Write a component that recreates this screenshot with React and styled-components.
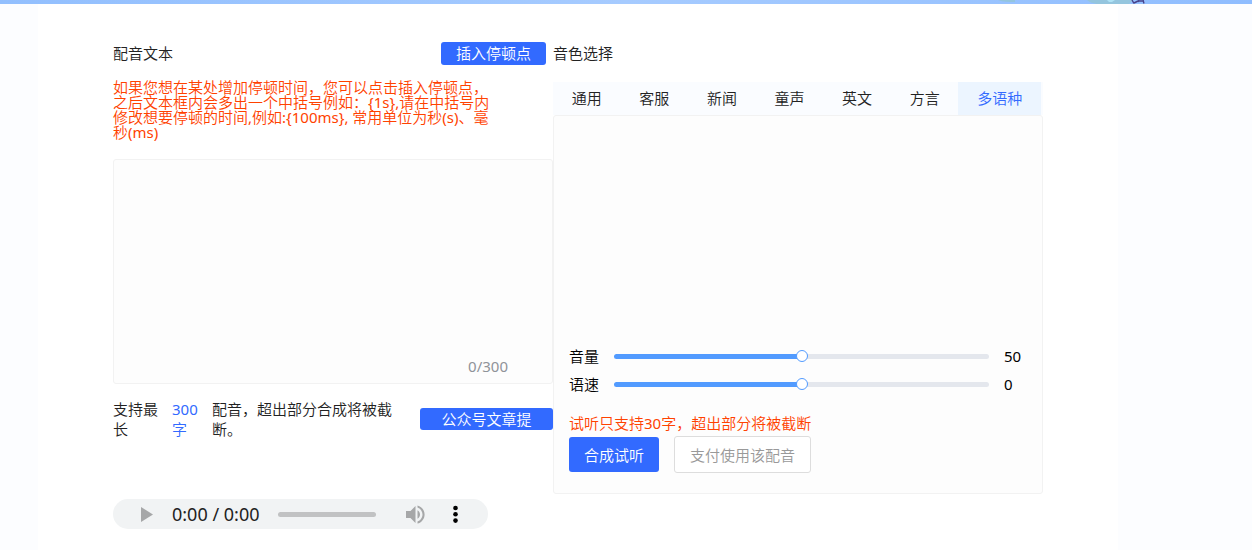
import React, { useState } from "react";
import styled, { createGlobalStyle } from "styled-components";

const TABS = ["通用", "客服", "新闻", "童声", "英文", "方言", "多语种"];
const MAX_LENGTH = 300;

function App() {
    const [text, setText] = useState("");
    const [activeTab, setActiveTab] = useState("多语种");
    const [volume, setVolume] = useState(50);
    const [speed, setSpeed] = useState(0);

    return (
        <>
            <GlobalStyle />
            <Banner>
                <BannerArt />
            </Banner>
            <Page>
                <Card>
                    <TextColumn>
                        <TextHeader>
                            <FieldLabel htmlFor="dub-text">配音文本</FieldLabel>
                            <PauseButton type="button" onClick={() => setText(text + "{1s}")}>
                                插入停顿点
                            </PauseButton>
                        </TextHeader>
                        <Tip>
                            如果您想在某处增加停顿时间，您可以点击插入停顿点，之后文本框内会多出一个中括号例如：{"{1s}"},请在中括号内修改想要停顿的时间,例如:{"{100ms}"}, 常用单位为秒(s)、毫秒(ms)
                        </Tip>
                        <TextBox>
                            <TextArea
                                id="dub-text"
                                maxLength={MAX_LENGTH}
                                value={text}
                                onChange={(e) => setText(e.target.value)}
                            />
                            <Counter>{`${text.length}/${MAX_LENGTH}`}</Counter>
                        </TextBox>
                        <LimitRow>
                            <span>支持最长</span>
                            <LimitNumber>300字</LimitNumber>
                            <span>配音，超出部分合成将被截断。</span>
                            <ExtractButton type="button">公众号文章提</ExtractButton>
                        </LimitRow>
                        <AudioPlayer />
                    </TextColumn>
                    <VoiceColumn>
                        <VoiceTitle>音色选择</VoiceTitle>
                        <TabBar role="tablist">
                            {TABS.map((name) => (
                                <Tab
                                    key={name}
                                    type="button"
                                    role="tab"
                                    aria-selected={name === activeTab}
                                    $active={name === activeTab}
                                    onClick={() => setActiveTab(name)}
                                >
                                    {name}
                                </Tab>
                            ))}
                        </TabBar>
                        <Panel>
                            <VoiceList />
                            <SliderRow id="volume" label="音量" min={0} max={100} value={volume} onChange={setVolume} />
                            <SliderRow id="speed" label="语速" min={-500} max={500} value={speed} onChange={setSpeed} />
                            <Hint>试听只支持30字，超出部分将被截断</Hint>
                            <Actions>
                                <ListenButton type="button">合成试听</ListenButton>
                                <PayButton type="button">支付使用该配音</PayButton>
                            </Actions>
                        </Panel>
                    </VoiceColumn>
                </Card>
            </Page>
        </>
    );
}

function SliderRow({ id, label, min, max, value, onChange }) {
    const percent = ((value - min) / (max - min)) * 100;

    return (
        <SliderLine>
            <label htmlFor={id}>{label}</label>
            <Slider
                id={id}
                type="range"
                min={min}
                max={max}
                value={value}
                style={{ "--percent": `${percent}%` }}
                onChange={(e) => onChange(Number(e.target.value))}
            />
            <SliderValue htmlFor={id}>{value}</SliderValue>
        </SliderLine>
    );
}

function AudioPlayer() {
    return (
        <Player>
            <PlayerButton type="button" aria-label="播放">
                <svg width="20" height="20" viewBox="0 0 20 20">
                    <path d="M5 3v15L17 10.5z" fill="#a6a7a8" />
                </svg>
            </PlayerButton>
            <Time>0:00 / 0:00</Time>
            <Progress type="range" min="0" max="1" defaultValue="0" aria-label="进度" />
            <PlayerButton type="button" aria-label="音量">
                <svg width="24" height="24" viewBox="0 0 24 24">
                    <path
                        d="M3 9v7h4.500l5 5V4L7.500 9H3zM17 12.500c0-1.900-1-3.500-2.500-4.300v8.600c1.500-.8 2.500-2.400 2.500-4.300zM14.500 3.400v2.200c2.900.9 5 3.700 5 6.900s-2.100 6-5 6.900v2.200c4.100-.9 7.100-4.700 7.100-9.100S18.600 4.300 14.500 3.400z"
                        fill="#a6a7a8"
                    />
                </svg>
            </PlayerButton>
            <PlayerButton type="button" aria-label="更多">
                <svg width="20" height="20" viewBox="0 0 20 20">
                    <circle cx="10.500" cy="4" r="2.3" />
                    <circle cx="10.500" cy="10.3" r="2.3" />
                    <circle cx="10.500" cy="16.6" r="2.3" />
                </svg>
            </PlayerButton>
        </Player>
    );
}

// bottom edge of the banner illustration
function BannerArt() {
    return (
        <svg width="160" height="4" viewBox="0 0 160 4">
            <path d="M11 0h17v2c-6 0-12 0-17-2z" fill="#94c5de" />
            <path d="M100 0h46l-4 4h-32c-5-1-8-2-10-4z" fill="#94c5de" />
            <path d="M120 0h8l-3 2h-3z" fill="#aee2f5" />
            <path d="M145 0l2 3.500M147 3l4-2M152 0l-1 2M151 1h6M156 0l1 3.500" stroke="#48438c" strokeWidth="1.4" fill="none" />
        </svg>
    );
}

// Styled Components

const GlobalStyle = createGlobalStyle`
  * {
    box-sizing: border-box;
  }
  body {
    margin: 0;
    background-color: #fcfdff;
    color: #222;
    font-family: "Noto Sans", "Noto Sans CJK SC DemiLight", "Noto Sans CJK SC", sans-serif;
    font-size: 15px;
    font-weight: 400;
  }
  button, input, textarea {
    font: inherit;
    margin: 0;
  }
  button {
    border: none;
    padding: 0;
    cursor: pointer;
  }
`;

const Banner = styled.div`
  display: flex;
  justify-content: flex-end;
  height: 4px;
  padding-right: 105px;
  background: linear-gradient(90deg, #92bffe, #a6cbff 50%, #8fbdff);
`;

const Page = styled.div`
  padding-left: 38px;
`;

const Card = styled.main`
  display: flex;
  max-width: 1080px;
  min-height: calc(100vh - 4px);
  padding: 38px 75px 20px;
  background-color: #fff;
`;

const TextColumn = styled.section`
  flex: 440 1 0;
  min-width: 0;
`;

const VoiceColumn = styled.section`
  flex: 490 1 0;
  min-width: 0;
`;

const TextHeader = styled.div`
  display: flex;
  align-items: center;
  justify-content: space-between;
  padding-right: 7px;
`;

const FieldLabel = styled.label`
  line-height: 23px;
`;

const BlueButton = styled.button`
  background-color: #326aff;
  color: #fff;
  border-radius: 3px;
`;

const PauseButton = styled(BlueButton)`
  height: 23px;
  padding: 0 15px;
  line-height: 23px;
`;

const Tip = styled.p`
  width: 380px;
  margin: 15px 0 19px;
  line-height: 15px;
  color: #ff4200;
`;

const TextBox = styled.div`
  position: relative;
  height: 225px;
`;

const TextArea = styled.textarea`
  display: block;
  width: 100%;
  height: 100%;
  padding: 10px 15px;
  border: 1px solid #f2f2f2;
  border-radius: 3px;
  background-color: #fdfdfd;
  resize: none;
  outline: none;
`;

const Counter = styled.span`
  position: absolute;
  right: 45px;
  bottom: 8px;
  line-height: 20px;
  color: #909399;
`;

const LimitRow = styled.div`
  display: grid;
  grid-template-columns: 45px 26px 1fr 133px;
  column-gap: 14px;
  margin-top: 15px;
  line-height: 20px;
`;

const LimitNumber = styled.span`
  color: #326aff;
`;

const ExtractButton = styled(BlueButton)`
  height: 22px;
  margin-top: 9px;
  line-height: 20px;
`;

const Player = styled.div`
  display: flex;
  align-items: center;
  width: 375px;
  height: 30px;
  margin-top: 60px;
  padding: 0 23px;
  border-radius: 15px;
  background-color: #f1f3f4;
`;

const PlayerButton = styled.button`
  display: flex;
  background: none;
`;

const Time = styled.span`
  margin: 0 19px 0 16px;
  font-size: 18px;
  line-height: 30px;
  white-space: nowrap;
`;

const Progress = styled.input`
  appearance: none;
  flex: 1;
  min-width: 0;
  height: 5px;
  margin-right: 27px;
  border-radius: 3px;
  background-color: #c1c2c3;

  &::-webkit-slider-thumb {
    appearance: none;
    width: 0;
    height: 0;
  }

  & + button {
    margin-right: 18px;
  }
`;

const VoiceTitle = styled.h2`
  margin: 0 0 18px;
  font-size: 15px;
  font-weight: 400;
  line-height: 22px;
`;

const TabBar = styled.div`
  display: flex;
  height: 33px;
  padding-right: 2px;
  background-color: #fafcff;
`;

const Tab = styled.button`
  flex: 1 0 auto;
  padding: 0 18px;
  line-height: 33px;
  color: ${(props) => (props.$active ? "#326aff" : "#222")};
  background-color: ${(props) => (props.$active ? "#ecf5ff" : "transparent")};
`;

const Panel = styled.div`
  padding: 0 15px 20px;
  border: 1px solid #f2f2f2;
  border-radius: 3px;
  background-color: #fdfdfd;
`;

const VoiceList = styled.div`
  height: 226px;
`;

const SliderLine = styled.div`
  display: flex;
  align-items: center;
  gap: 15px;
  height: 28px;
  line-height: 20px;
  color: #000;
`;

const Slider = styled.input`
  appearance: none;
  flex: 1;
  min-width: 0;
  height: 5px;
  border-radius: 3px;
  background: linear-gradient(90deg, #529bff var(--percent), #e4e7ed var(--percent));
  cursor: pointer;

  &::-webkit-slider-thumb {
    appearance: none;
    width: 12px;
    height: 12px;
    border: 1px solid #529bff;
    border-radius: 50%;
    background-color: #fff;
  }
`;

const SliderValue = styled.output`
  width: 23px;
`;

const Hint = styled.p`
  margin: 14px 0 0;
  line-height: 22px;
  padding-bottom: 2px;
  color: #ff4200;
`;

const Actions = styled.div`
  display: flex;
  align-items: center;
  gap: 15px;
`;

const ListenButton = styled(BlueButton)`
  height: 35px;
  padding: 0 15px;
`;

const PayButton = styled.button`
  height: 37px;
  padding: 0 15px;
  border: 1px solid #ddd;
  border-radius: 3px;
  background-color: #fff;
  color: #999;
`;

export default App;
